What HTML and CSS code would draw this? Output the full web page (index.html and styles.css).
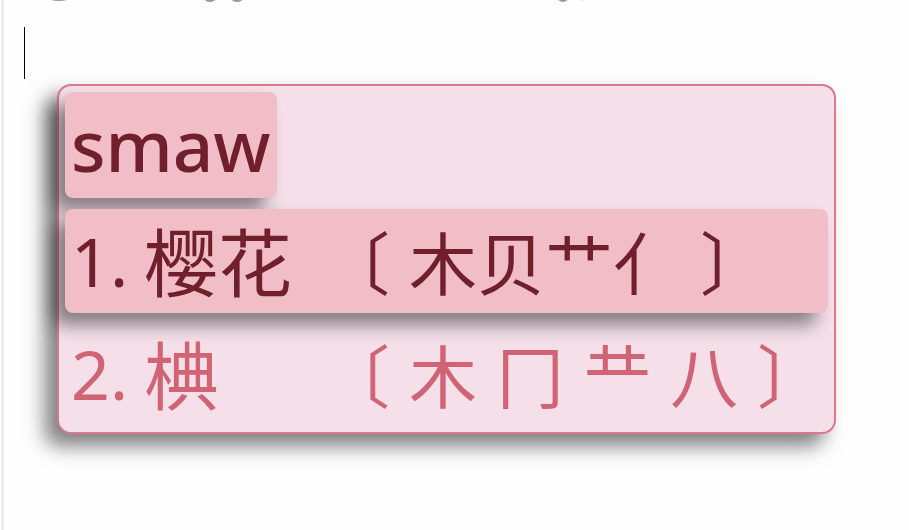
FILE: index.html
```
<!DOCTYPE html>
<html lang="zh-CN">
<head>
<meta charset="utf-8">
<title>输入法候选窗口</title>
<link rel="stylesheet" href="styles.css">
</head>
<body>
<main class="page">
  <svg class="clipped-line" width="600" height="3" viewBox="0 0 600 3" aria-hidden="true">
    <ellipse cx="59" cy="-3" rx="12" ry="4"/>
    <ellipse cx="210" cy="-2" rx="6" ry="4"/>
    <ellipse cx="237" cy="-2" rx="6" ry="4"/>
    <ellipse cx="563" cy="-2" rx="5" ry="4"/>
    <ellipse class="faint" cx="582" cy="-1" rx="2" ry="2"/>
  </svg>
  <div class="caret"></div>
  <section class="panel">
    <div class="preedit">smaw</div>
    <ol class="candidates">
      <li class="candidate selected">
        <span class="label">1.</span>
        <span class="word">樱花</span>
        <span class="code"><span>〔</span><span class="roots">木贝艹亻</span><span>〕</span></span>
      </li>
      <li class="candidate">
        <span class="label">2.</span>
        <span class="word">椣</span>
        <span class="code"><span>〔</span><span>木</span><span>冂</span><span>龷</span><span>八</span><span>〕</span></span>
      </li>
    </ol>
  </section>
</main>
</body>
</html>
```
FILE: styles.css
```
* { box-sizing: border-box; }
body {
  margin: 0;
  background: #fefefe;
  font-family: "Noto Sans", "Noto Sans CJK SC", sans-serif;
}
.page {
  min-height: 100vh;
  margin-left: 1px;
  border-left: 3px solid #ebebeb;
  padding: 0 73px 80px 20px;
  overflow: hidden;
}
.clipped-line {
  display: block;
  margin-left: -24px;
  fill: #999;
}
.clipped-line .faint { fill: #e4e4e4; }
.caret {
  width: 1px;
  height: 52px;
  margin-top: 24px;
  background: #000;
}
.panel {
  margin: 5px 0 0 33px;
  padding: 6px;
  border: 2px solid #d9788f;
  border-radius: 14px;
  background: #f5e0e9;
  box-shadow: -12px 12px 20px rgba(0, 0, 0, 0.5);
}
.preedit {
  width: fit-content;
  padding: 0 6px;
  border-radius: 8px;
  background: #f1bdc6;
  color: #6f202c;
  font-size: 71px;
  font-weight: 500;
  line-height: 106px;
  box-shadow: -12px 12px 18px rgba(0, 0, 0, 0.45);
}
.candidates {
  margin: 11px 0 0;
  padding: 0;
  list-style: none;
}
.candidate {
  display: grid;
  grid-template-columns: 73px 178px 1fr;
  align-items: center;
  height: 104px;
  padding: 0 6px;
  border-radius: 8px;
  color: #d16474;
  white-space: nowrap;
}
.candidate + .candidate { margin-top: 9px; }
.selected {
  background: #f1bdc6;
  color: #6f202c;
  box-shadow: -12px 12px 18px rgba(0, 0, 0, 0.45);
}
.label {
  font-size: 68px;
  line-height: 104px;
}
.word {
  font-family: "Noto Sans CJK SC", sans-serif;
  font-size: 74px;
  line-height: 100px;
  padding-bottom: 4px;
}
.code {
  display: flex;
  gap: 19px;
  font-family: "Noto Sans CJK SC", sans-serif;
  font-size: 68px;
  line-height: 104px;
}
```
